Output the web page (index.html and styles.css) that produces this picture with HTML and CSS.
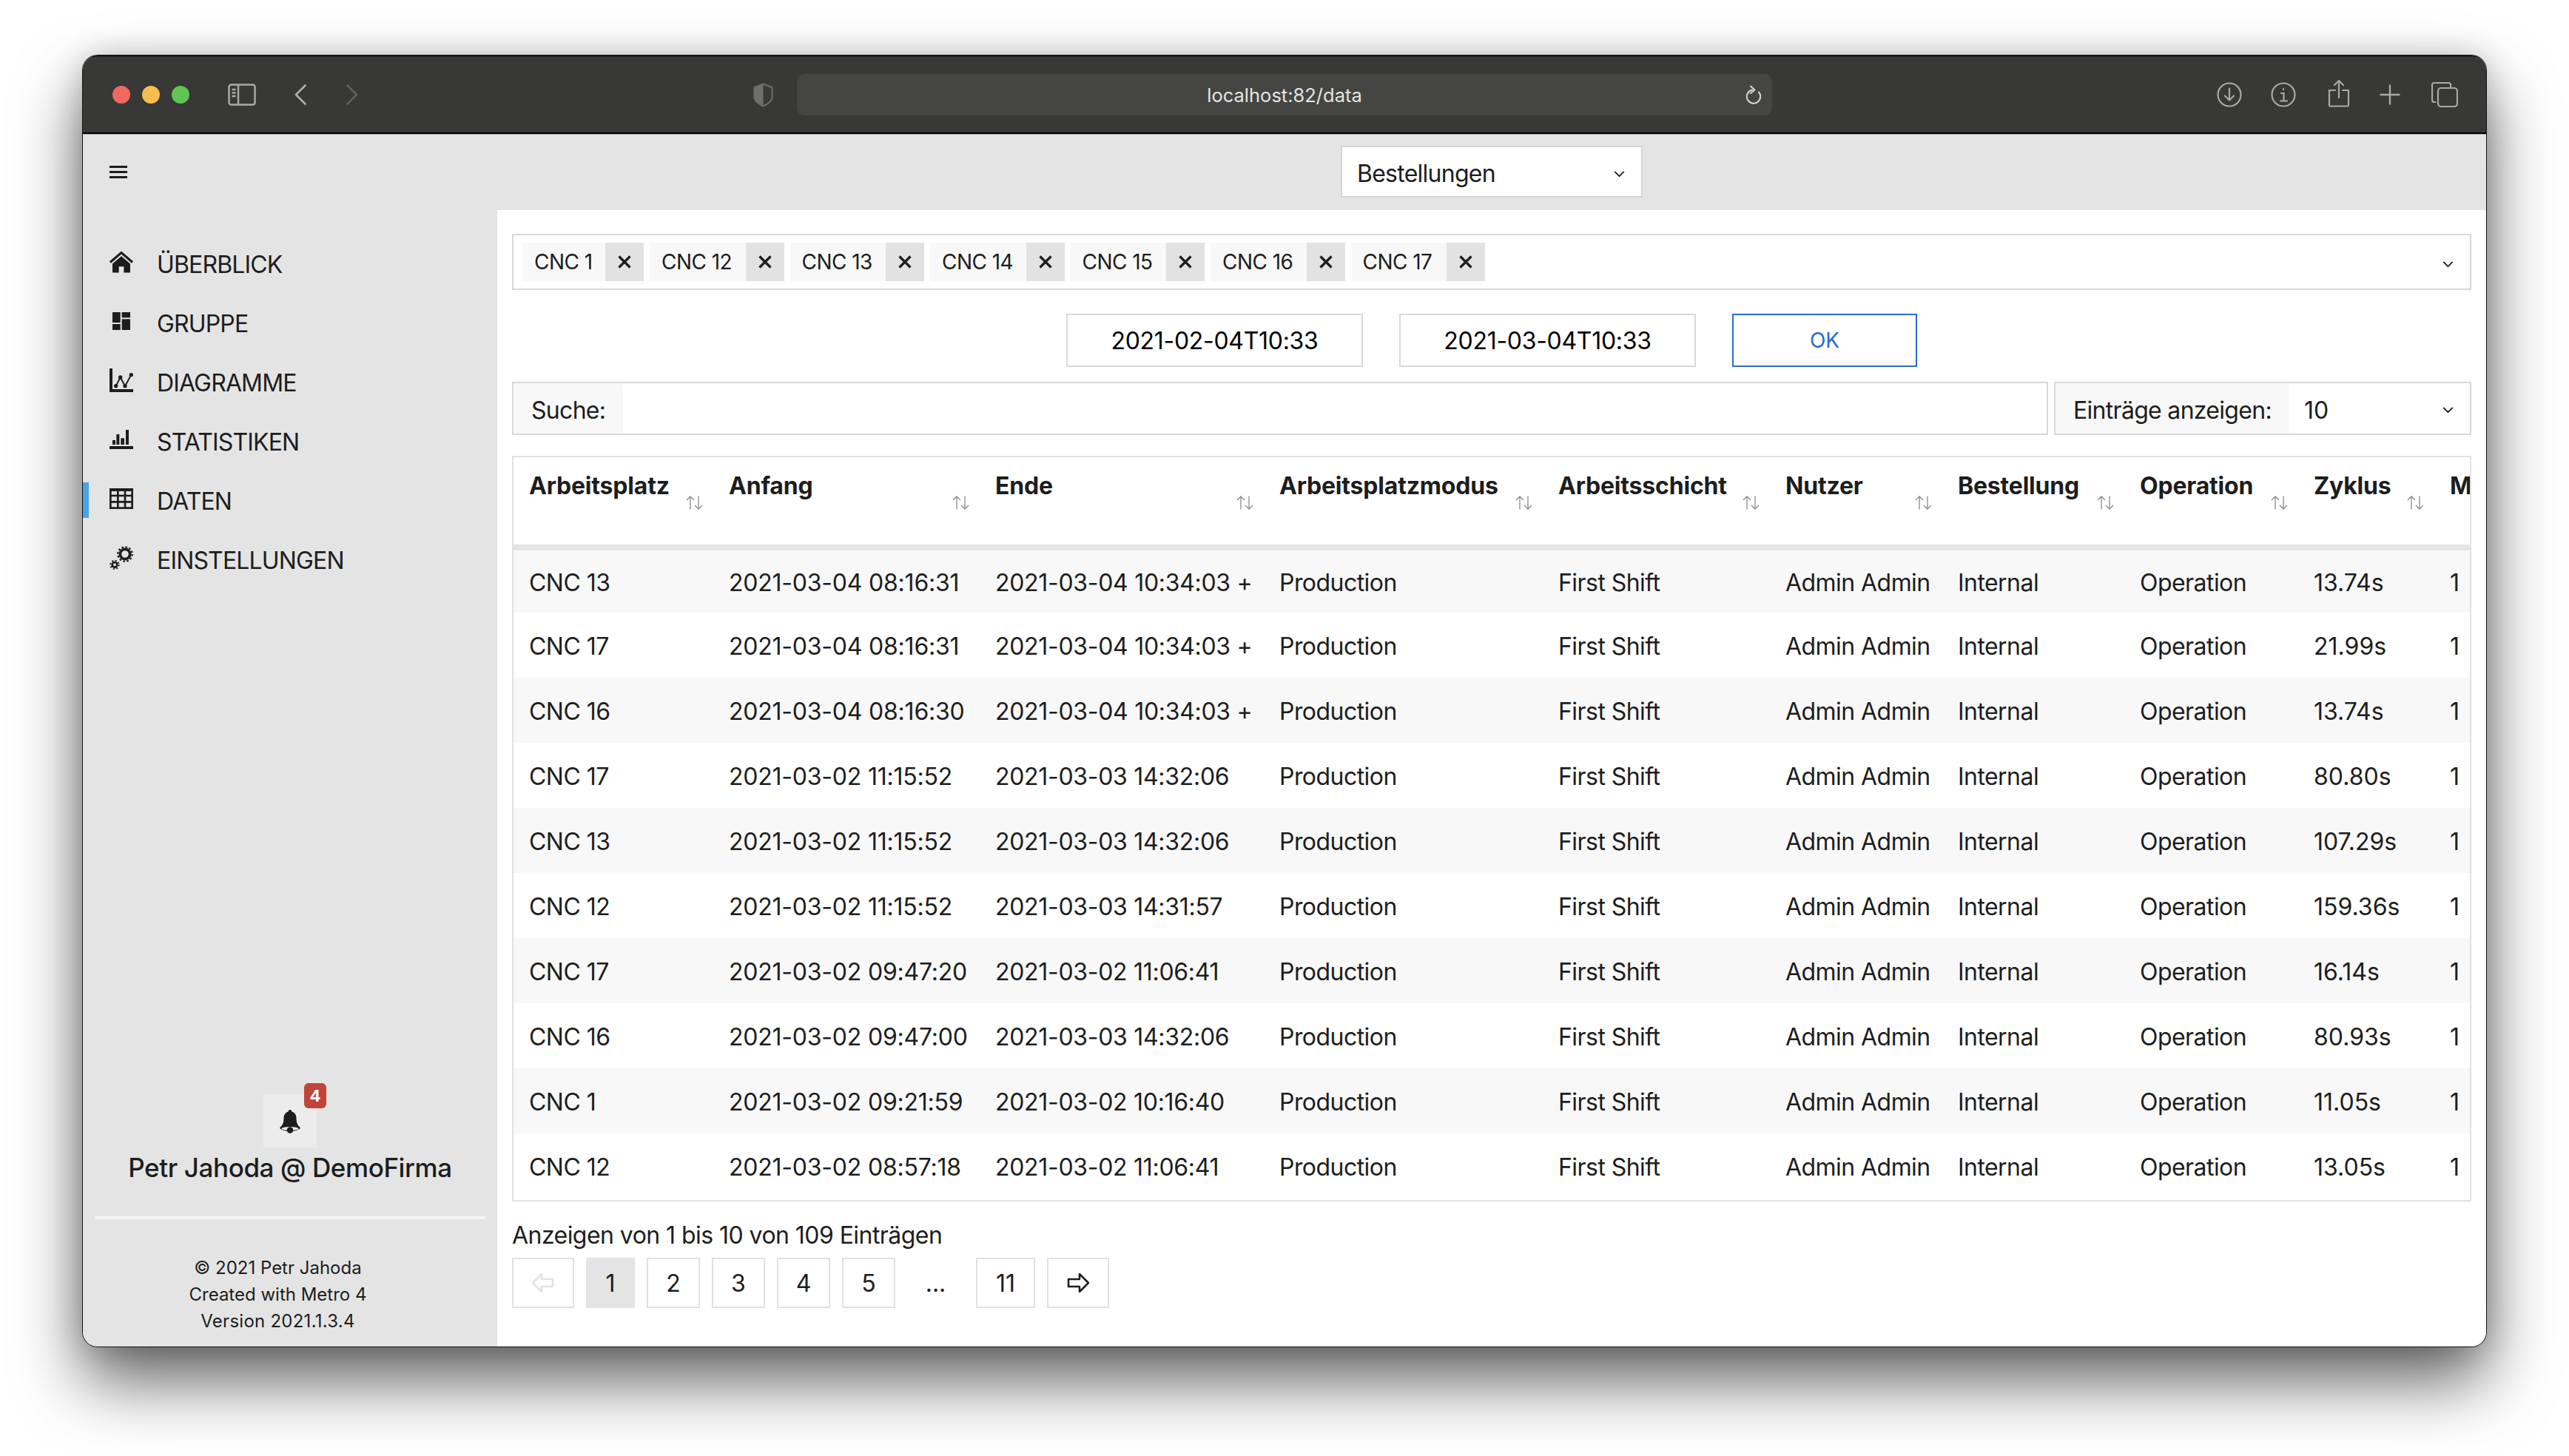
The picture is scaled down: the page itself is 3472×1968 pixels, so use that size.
FILE: index.html
```html
<!DOCTYPE html>
<html>
<head>
  <meta charset="utf-8">
  <title>localhost:82/data</title>
  <link rel="stylesheet" href="styles.css">
</head>
<body>
  <div class="window">
    <div class="titlebar">
      <span class="light light-red"></span>
      <span class="light light-yellow"></span>
      <span class="light light-green"></span>
      <svg class="tb-sidebar" viewBox="0 0 38 30" fill="none" stroke="#a9a9a8" stroke-width="2.5"><rect x="1.5" y="1.5" width="35" height="27" rx="3"/><path d="M14 1.5v27M5.5 8h5M5.5 12.5h5M5.5 17h5"/></svg>
      <svg class="tb-back" viewBox="0 0 16 28" fill="none" stroke="#b0b0af" stroke-width="2.6" stroke-linecap="round" stroke-linejoin="round"><path d="M14.5 1.5 2 14l12.5 12.5"/></svg>
      <svg class="tb-forward" viewBox="0 0 16 28" fill="none" stroke="#5f5f5e" stroke-width="2.6" stroke-linecap="round" stroke-linejoin="round"><path d="M1.5 1.5 14 14 1.5 26.5"/></svg>
      <svg class="tb-shield" viewBox="0 0 27 33" fill="none"><path d="M13.5 1.5 25.5 6v14c0 4-6 9-12 11.5-6-2.5-12-7.5-12-11.5V6z" stroke="#6e6e6d" stroke-width="2"/><path d="M13.5 1.5 1.5 6v14c0 4 6 9 12 11.5z" fill="#6e6e6d"/></svg>
      <div class="urlbar">
        <span class="url-text">localhost:82/data</span>
        <svg class="url-reload" viewBox="0 0 22 26" fill="none" stroke="#d8d8d8" stroke-width="2" stroke-linecap="round" stroke-linejoin="round"><path d="M9 6.5a9.2 9.2 0 1 0 9 3"/><path d="M7 1.5 12.5 6.5 7 11"/></svg>
      </div>
      <div class="tb-actions">
        <svg class="tb-icon" viewBox="0 0 34 34" fill="none" stroke="#a9a9a8" stroke-width="2.2" stroke-linecap="round" stroke-linejoin="round"><circle cx="17" cy="17" r="15.5"/><path d="M17 8.5v16M11 18.5l6 6 6-6"/></svg>
        <svg class="tb-icon tb-info" viewBox="0 0 34 34" fill="none" stroke="#a9a9a8" stroke-width="2.2" stroke-linecap="round"><circle cx="17" cy="17" r="15.5"/><path d="M14 15h3.5v10M13 25.5h9M17 9v1"/></svg>
        <svg class="tb-icon tb-share" viewBox="0 0 30 38" fill="none" stroke="#a9a9a8" stroke-width="2.2" stroke-linecap="round" stroke-linejoin="round"><path d="M15 2v23M9 8l6-6 6 6M10 15H2v20a1.5 1.5 0 0 0 1.5 1.5h23A1.5 1.5 0 0 0 28 35V15h-8"/></svg>
        <svg class="tb-icon tb-plus" viewBox="0 0 28 28" fill="none" stroke="#a9a9a8" stroke-width="2.4" stroke-linecap="round"><path d="M14 1.5v25M1.5 14h25"/></svg>
        <svg class="tb-icon tb-tabs" viewBox="0 0 36 34" fill="none" stroke="#a9a9a8" stroke-width="2.2" stroke-linejoin="round"><path d="M6 27H4a3 3 0 0 1-3-3V4a3 3 0 0 1 3-3h19a3 3 0 0 1 3 3v4"/><rect x="9" y="8" width="26" height="25" rx="4"/></svg>
      </div>
    </div>

    <div class="app-top">
      <div class="app-top-left">
        <div class="hamburger"><span></span><span></span><span></span></div>
      </div>
      <div class="app-top-main">
        <div class="page-select">
          <span class="page-select-text">Bestellungen</span>
          <svg class="chevron page-select-chevron" viewBox="0 0 12 8" fill="none" stroke="#222" stroke-width="1.5"><path d="M1 1.5 6 6.5l5-5"/></svg>
        </div>
      </div>
    </div>

    <div class="app-body">
      <aside class="sidebar">
        <nav class="nav">
          <a class="nav-item">
            <svg class="nav-icon" viewBox="0 0 96 87" fill="#1d1d1d"><path d="M3 45 48 6l45 39" fill="none" stroke="#1d1d1d" stroke-width="9"/><path d="M12 51 48 20l36 31v36H58V62H38v25H12z"/></svg>
            <span>ÜBERBLICK</span>
          </a>
          <a class="nav-item">
            <svg class="nav-icon" viewBox="-12 -12 96 96" fill="#1d1d1d"><rect width="32" height="42"/><rect x="38" width="34" height="22"/><rect y="48" width="32" height="24"/><rect x="38" y="28" width="34" height="44"/></svg>
            <span>GRUPPE</span>
          </a>
          <a class="nav-item">
            <svg class="nav-icon" viewBox="0 0 96 96" fill="#1d1d1d"><path d="M0 0h12v84h84v12H0z"/><path d="M26 71 44 36l19 35 25-45" fill="none" stroke="#1d1d1d" stroke-width="6"/><circle cx="26" cy="71" r="8"/><circle cx="44" cy="36" r="8"/><circle cx="63" cy="71" r="8"/><circle cx="88" cy="26" r="8"/></svg>
            <span>DIAGRAMME</span>
          </a>
          <a class="nav-item">
            <svg class="nav-icon" viewBox="0 0 96 78" fill="#1d1d1d"><rect y="66" width="96" height="12"/><rect x="12" y="42" width="12" height="18"/><rect x="28" y="18" width="12" height="42"/><rect x="46" y="34" width="14" height="26"/><rect x="66" width="12" height="60"/></svg>
            <span>STATISTIKEN</span>
          </a>
          <a class="nav-item nav-item-active">
            <svg class="nav-icon" viewBox="0 0 96 84" fill="none" stroke="#1d1d1d" stroke-width="8"><rect x="4" y="6" width="88" height="74"/><path d="M0 6h96" stroke-width="12"/><path d="M2 30h92M2 55h92M34 4v78M63 4v78"/></svg>
            <span>DATEN</span>
          </a>
          <a class="nav-item">
            <svg class="nav-icon" viewBox="0 0 96 96" fill="none" stroke="#1d1d1d"><circle cx="63" cy="33" r="20" stroke-width="11"/><circle cx="63" cy="33" r="29" stroke-width="7" stroke-dasharray="8 7.2"/><circle cx="21" cy="76" r="10" stroke-width="8"/><circle cx="21" cy="76" r="17" stroke-width="6" stroke-dasharray="6 7.3"/></svg>
            <span>EINSTELLUNGEN</span>
          </a>
        </nav>

        <div class="user-block">
          <div class="bell">
            <svg class="bell-icon" viewBox="0 0 28 32" fill="#1d1d1d"><path d="M14 0c1.5 0 2.3 1 2.3 2.4 4 1 6.2 4.5 6.2 9 0 6 1.5 9 5.5 13.1-1.5 2.5-7 4.5-14 4.5S1.5 27 0 24.500c4-4.100 5.500-7.100 5.500-13.100 0-4.500 2.200-8 6.200-9C11.700 1 12.500 0 14 0z"/><ellipse cx="14" cy="25.500" rx="11.500" ry="2.600" fill="#ececec"/><circle cx="14" cy="27.500" r="4.300"/></svg>
            <span class="bell-badge">4</span>
          </div>
          <div class="user-name">Petr Jahoda @ DemoFirma</div>
        </div>
        <div class="side-divider"></div>
        <div class="side-footer">
          <div>© 2021 Petr Jahoda</div>
          <div>Created with Metro 4</div>
          <div class="side-version">Version 2021.1.3.4</div>
        </div>
      </aside>

      <main class="content">
        <div class="tag-box">
          <div class="tag"><span class="tag-label">CNC 1</span><span class="tag-x"><svg viewBox="0 0 18 18" fill="none" stroke="#1d1d1d" stroke-width="3.2"><path d="M1.5 1.5l15 15M16.5 1.5l-15 15"/></svg></span></div>
          <div class="tag"><span class="tag-label">CNC 12</span><span class="tag-x"><svg viewBox="0 0 18 18" fill="none" stroke="#1d1d1d" stroke-width="3.2"><path d="M1.5 1.5l15 15M16.5 1.5l-15 15"/></svg></span></div>
          <div class="tag"><span class="tag-label">CNC 13</span><span class="tag-x"><svg viewBox="0 0 18 18" fill="none" stroke="#1d1d1d" stroke-width="3.2"><path d="M1.5 1.5l15 15M16.5 1.5l-15 15"/></svg></span></div>
          <div class="tag"><span class="tag-label">CNC 14</span><span class="tag-x"><svg viewBox="0 0 18 18" fill="none" stroke="#1d1d1d" stroke-width="3.2"><path d="M1.5 1.5l15 15M16.5 1.5l-15 15"/></svg></span></div>
          <div class="tag"><span class="tag-label">CNC 15</span><span class="tag-x"><svg viewBox="0 0 18 18" fill="none" stroke="#1d1d1d" stroke-width="3.2"><path d="M1.5 1.5l15 15M16.5 1.5l-15 15"/></svg></span></div>
          <div class="tag"><span class="tag-label">CNC 16</span><span class="tag-x"><svg viewBox="0 0 18 18" fill="none" stroke="#1d1d1d" stroke-width="3.2"><path d="M1.5 1.5l15 15M16.5 1.5l-15 15"/></svg></span></div>
          <div class="tag"><span class="tag-label">CNC 17</span><span class="tag-x"><svg viewBox="0 0 18 18" fill="none" stroke="#1d1d1d" stroke-width="3.2"><path d="M1.5 1.5l15 15M16.5 1.5l-15 15"/></svg></span></div>
          <svg class="chevron tag-chevron" viewBox="0 0 12 8" fill="none" stroke="#222" stroke-width="1.5"><path d="M1 1.5 6 6.5l5-5"/></svg>
        </div>

        <div class="date-row">
          <div class="date-input">2021-02-04T10:33</div>
          <div class="date-input">2021-03-04T10:33</div>
          <button class="ok-btn">OK</button>
        </div>

        <div class="filter-row">
          <div class="search-box">
            <span class="prepend">Suche:</span>
          </div>
          <div class="length-box">
            <span class="prepend prepend-length">Einträge anzeigen:</span>
            <span class="length-value">10</span>
            <svg class="chevron length-chevron" viewBox="0 0 12 8" fill="none" stroke="#222" stroke-width="1.5"><path d="M1 1.5 6 6.5l5-5"/></svg>
          </div>
        </div>

        <div class="table-wrap">
          <table class="data-table">
            <colgroup>
              <col class="c1"><col class="c2"><col class="c3"><col class="c4"><col class="c5">
              <col class="c6"><col class="c7"><col class="c8"><col class="c9"><col class="c10">
            </colgroup>
            <thead>
              <tr>
                <th>Arbeitsplatz<svg class="sort" viewBox="0 0 23 19" fill="none" stroke="#8a8a8a" stroke-width="1.3"><path d="M6 18.5V1M1 6l5-5 5 5M17 .5V18M12 13l5 5 5-5"/></svg></th>
                <th>Anfang<svg class="sort" viewBox="0 0 23 19" fill="none" stroke="#8a8a8a" stroke-width="1.3"><path d="M6 18.5V1M1 6l5-5 5 5M17 .5V18M12 13l5 5 5-5"/></svg></th>
                <th>Ende<svg class="sort" viewBox="0 0 23 19" fill="none" stroke="#8a8a8a" stroke-width="1.3"><path d="M6 18.5V1M1 6l5-5 5 5M17 .5V18M12 13l5 5 5-5"/></svg></th>
                <th>Arbeitsplatzmodus<svg class="sort" viewBox="0 0 23 19" fill="none" stroke="#8a8a8a" stroke-width="1.3"><path d="M6 18.5V1M1 6l5-5 5 5M17 .5V18M12 13l5 5 5-5"/></svg></th>
                <th>Arbeitsschicht<svg class="sort" viewBox="0 0 23 19" fill="none" stroke="#8a8a8a" stroke-width="1.3"><path d="M6 18.5V1M1 6l5-5 5 5M17 .5V18M12 13l5 5 5-5"/></svg></th>
                <th>Nutzer<svg class="sort" viewBox="0 0 23 19" fill="none" stroke="#8a8a8a" stroke-width="1.3"><path d="M6 18.5V1M1 6l5-5 5 5M17 .5V18M12 13l5 5 5-5"/></svg></th>
                <th>Bestellung<svg class="sort" viewBox="0 0 23 19" fill="none" stroke="#8a8a8a" stroke-width="1.3"><path d="M6 18.5V1M1 6l5-5 5 5M17 .5V18M12 13l5 5 5-5"/></svg></th>
                <th>Operation<svg class="sort" viewBox="0 0 23 19" fill="none" stroke="#8a8a8a" stroke-width="1.3"><path d="M6 18.5V1M1 6l5-5 5 5M17 .5V18M12 13l5 5 5-5"/></svg></th>
                <th>Zyklus<svg class="sort" viewBox="0 0 23 19" fill="none" stroke="#8a8a8a" stroke-width="1.3"><path d="M6 18.5V1M1 6l5-5 5 5M17 .5V18M12 13l5 5 5-5"/></svg></th>
                <th>M</th>
              </tr>
            </thead>
            <tbody>
              <tr><td>CNC 13</td><td>2021-03-04 08:16:31</td><td>2021-03-04 10:34:03 +</td><td>Production</td><td>First Shift</td><td>Admin Admin</td><td>Internal</td><td>Operation</td><td>13.74s</td><td>1</td></tr>
              <tr><td>CNC 17</td><td>2021-03-04 08:16:31</td><td>2021-03-04 10:34:03 +</td><td>Production</td><td>First Shift</td><td>Admin Admin</td><td>Internal</td><td>Operation</td><td>21.99s</td><td>1</td></tr>
              <tr><td>CNC 16</td><td>2021-03-04 08:16:30</td><td>2021-03-04 10:34:03 +</td><td>Production</td><td>First Shift</td><td>Admin Admin</td><td>Internal</td><td>Operation</td><td>13.74s</td><td>1</td></tr>
              <tr><td>CNC 17</td><td>2021-03-02 11:15:52</td><td>2021-03-03 14:32:06</td><td>Production</td><td>First Shift</td><td>Admin Admin</td><td>Internal</td><td>Operation</td><td>80.80s</td><td>1</td></tr>
              <tr><td>CNC 13</td><td>2021-03-02 11:15:52</td><td>2021-03-03 14:32:06</td><td>Production</td><td>First Shift</td><td>Admin Admin</td><td>Internal</td><td>Operation</td><td>107.29s</td><td>1</td></tr>
              <tr><td>CNC 12</td><td>2021-03-02 11:15:52</td><td>2021-03-03 14:31:57</td><td>Production</td><td>First Shift</td><td>Admin Admin</td><td>Internal</td><td>Operation</td><td>159.36s</td><td>1</td></tr>
              <tr><td>CNC 17</td><td>2021-03-02 09:47:20</td><td>2021-03-02 11:06:41</td><td>Production</td><td>First Shift</td><td>Admin Admin</td><td>Internal</td><td>Operation</td><td>16.14s</td><td>1</td></tr>
              <tr><td>CNC 16</td><td>2021-03-02 09:47:00</td><td>2021-03-03 14:32:06</td><td>Production</td><td>First Shift</td><td>Admin Admin</td><td>Internal</td><td>Operation</td><td>80.93s</td><td>1</td></tr>
              <tr><td>CNC 1</td><td>2021-03-02 09:21:59</td><td>2021-03-02 10:16:40</td><td>Production</td><td>First Shift</td><td>Admin Admin</td><td>Internal</td><td>Operation</td><td>11.05s</td><td>1</td></tr>
              <tr><td>CNC 12</td><td>2021-03-02 08:57:18</td><td>2021-03-02 11:06:41</td><td>Production</td><td>First Shift</td><td>Admin Admin</td><td>Internal</td><td>Operation</td><td>13.05s</td><td>1</td></tr>
            </tbody>
          </table>
        </div>

        <div class="table-info">Anzeigen von 1 bis 10 von 109 Einträgen</div>

        <div class="pager">
          <span class="page page-arrow page-disabled"><svg viewBox="0 0 30 26" fill="none" stroke="#e2e2e2" stroke-width="2.5" stroke-linejoin="round"><path d="M13 1 1 13l12 12v-7h15V8H13z"/></svg></span>
          <span class="page page-current">1</span>
          <span class="page">2</span>
          <span class="page">3</span>
          <span class="page">4</span>
          <span class="page">5</span>
          <span class="page-dots">...</span>
          <span class="page page-last">11</span>
          <span class="page page-arrow"><svg viewBox="0 0 30 26" fill="none" stroke="#1d1d1d" stroke-width="2.5" stroke-linejoin="round"><path d="M17 1l12 12-12 12v-7H2V8h15z"/></svg></span>
        </div>
      </main>
    </div>
  </div>
</body>
</html>
```

FILE: styles.css
```css
* {
  box-sizing: border-box;
}

body {
  margin: 0;
  padding: 75px 112px 0 112px;
  height: 1968px;
  overflow: hidden;
  background: #fff;
  font-family: Inter, "Liberation Sans", sans-serif;
  font-size: 32px;
  letter-spacing: -.55px;
  color: #1d1d1d;
}

.window {
  width: 3248px;
  height: 1745px;
  display: flex;
  flex-direction: column;
  border-radius: 20px;
  overflow: hidden;
  box-shadow: 0 0 0 1px #111, 0 46px 90px rgba(0, 0, 0, .62), 0 0 40px rgba(0, 0, 0, .18);
}

/* browser chrome */
.titlebar {
  height: 106px;
  flex: none;
  display: flex;
  align-items: center;
  padding-left: 40px;
  background: #383836;
  border-top: 2px solid #1c1c1c;
  border-bottom: 2px solid #000;
}

.light {
  width: 24px;
  height: 24px;
  border-radius: 50%;
  margin-right: 16px;
}

.light-red { background: #f0695f; }
.light-yellow { background: #f6bd50; }
.light-green { background: #60c554; }

.tb-sidebar {
  width: 38px;
  height: 30px;
  margin-left: 36px;
}

.tb-back {
  width: 16px;
  height: 28px;
  margin-left: 52px;
}

.tb-forward {
  width: 16px;
  height: 28px;
  margin-left: 54px;
}

.tb-shield {
  width: 27px;
  height: 33px;
  margin-left: 534px;
}

.urlbar {
  width: 1318px;
  height: 56px;
  margin-left: 32px;
  border-radius: 10px;
  background: #454543;
  display: flex;
  align-items: center;
  justify-content: center;
  position: relative;
  font-size: 25.5px;
  letter-spacing: 0;
  color: #e4e4e4;
}

.url-reload {
  position: absolute;
  right: 14px;
  top: 15px;
  width: 22px;
  height: 26px;
}

.tb-actions {
  display: flex;
  align-items: center;
  margin-left: 601px;
}

.tb-icon {
  width: 34px;
  height: 34px;
  margin-right: 39px;
}

.tb-info {
  margin-right: 43px;
}

.tb-share {
  width: 30px;
  height: 38px;
  margin-top: -4px;
  margin-right: 37px;
}

.tb-plus {
  width: 28px;
  height: 28px;
  margin-left: 3px;
  margin-right: 42px;
}

.tb-tabs {
  width: 36px;
  margin-right: 0;
}

/* app header */
.app-top {
  height: 103px;
  flex: none;
  display: flex;
  background: #e4e4e4;
  border-top: 1px solid #aaa;
}

.app-top-left {
  width: 560px;
  padding: 42px 0 0 36px;
}

.hamburger {
  width: 24px;
  display: flex;
  flex-direction: column;
  gap: 4px;
}

.hamburger span {
  height: 3px;
  background: #1d1d1d;
}

.app-top-main {
  flex: 1;
  display: flex;
  justify-content: center;
  padding-top: 15px;
}

.page-select {
  width: 408px;
  height: 70px;
  display: flex;
  align-items: center;
  justify-content: space-between;
  padding: 0 22px 0 20px;
  background: #fff;
  border: 2px solid #d4d4d4;
}

.page-select-text {
  padding-top: 4px;
  letter-spacing: -.75px;
}

.page-select-chevron {
  margin-top: 5px;
}

.chevron {
  width: 15px;
  height: 10px;
  flex: none;
}

.app-body {
  flex: 1;
  display: flex;
  min-height: 0;
}

/* sidebar */
.sidebar {
  width: 560px;
  flex: none;
  display: flex;
  flex-direction: column;
  background: #e4e4e4;
  padding-top: 32px;
}

.nav {
  display: flex;
  flex-direction: column;
}

.nav-item {
  height: 80px;
  display: flex;
  align-items: center;
  padding-left: 36px;
  letter-spacing: -.85px;
  position: relative;
}

.nav-item span {
  margin-left: 32px;
  padding-top: 4px;
  line-height: 1;
}

.nav-icon {
  width: 32px;
  height: 32px;
  flex: none;
  margin-top: -5px;
}

.nav-item-active::before {
  content: "";
  position: absolute;
  left: 0;
  top: 16px;
  width: 8px;
  height: 48px;
  background: #4aa3e6;
}

.user-block {
  margin-top: auto;
  display: flex;
  flex-direction: column;
  align-items: center;
}

.bell {
  width: 72px;
  height: 72px;
  background: #ececec;
  display: flex;
  align-items: center;
  justify-content: center;
  position: relative;
}

.bell-icon {
  width: 28px;
  height: 32px;
  margin-top: 1px;
}

.bell-badge {
  position: absolute;
  top: -15px;
  right: -13px;
  width: 30px;
  height: 34px;
  border-radius: 6px;
  background: #c1443a;
  color: #fff;
  font-size: 22px;
  font-weight: 700;
  letter-spacing: 0;
  display: flex;
  align-items: center;
  justify-content: center;
}

.user-name {
  margin-top: 4px;
  font-size: 35px;
  font-weight: 500;
  letter-spacing: -.4px;
  line-height: 46px;
}

.side-divider {
  margin: 43px 16px 0 16px;
  height: 4px;
  background: #f5f5f5;
}

.side-footer {
  margin-top: 48px;
  padding: 0 33px 16px 0;
  font-size: 24px;
  letter-spacing: 0;
  line-height: 36px;
  text-align: center;
}

.side-version {
  letter-spacing: .25px;
}

/* main column */
.content {
  flex: 1;
  min-width: 0;
  background: #fff;
  padding: 32px 20px 0 20px;
  display: flex;
  flex-direction: column;
}

.tag-box {
  height: 76px;
  flex: none;
  border: 2px solid #d9d9d9;
  display: flex;
  align-items: center;
  padding-left: 12px;
  gap: 8px;
  position: relative;
}

.tag {
  height: 52px;
  display: flex;
  font-size: 28px;
  background: #f8f8f8;
}

.tag-label {
  width: 112px;
  padding-left: 16px;
  line-height: 52px;
  white-space: nowrap;
}

.tag + .tag .tag-label {
  width: 129.5px;
}

.tag-x {
  width: 52px;
  background: #e2e2e2;
  display: flex;
  align-items: center;
  justify-content: center;
}

.tag-x svg {
  width: 18px;
  height: 18px;
}

.tag-chevron {
  position: absolute;
  right: 22px;
  top: 34px;
}

.date-row {
  margin-top: 32px;
  height: 72px;
  flex: none;
  display: flex;
  justify-content: center;
  gap: 49px;
}

.date-input {
  width: 401px;
  border: 2px solid #d9d9d9;
  display: flex;
  align-items: center;
  justify-content: center;
  letter-spacing: -.3px;
  color: #000;
}

.ok-btn {
  width: 250px;
  border: 2px solid #2a6ad0;
  background: #fff;
  color: #2a6ad0;
  font-family: inherit;
  font-size: 28px;
  padding: 0;
}

.filter-row {
  margin-top: 20px;
  height: 72px;
  flex: none;
  display: flex;
  gap: 8px;
}

.search-box {
  flex: 1;
  border: 2px solid #d9d9d9;
  display: flex;
}

.length-box {
  width: 564px;
  border: 2px solid #d9d9d9;
  display: flex;
  align-items: center;
}

.prepend {
  height: 100%;
  padding: 4px 24px 0 24px;
  background: #f8f8f8;
  display: flex;
  align-items: center;
  letter-spacing: -.7px;
}

.prepend-length {
  width: 316px;
  white-space: nowrap;
}

.length-value {
  margin-left: 20px;
  padding-top: 4px;
  flex: 1;
  letter-spacing: 0;
}

.length-chevron {
  margin-right: 22px;
  margin-top: 3px;
}

.table-wrap {
  margin-top: 28px;
  height: 1008px;
  flex: none;
  border: 2px solid #e1e1e1;
  overflow: hidden;
}

.data-table {
  width: 2696px;
  table-layout: fixed;
  border-collapse: collapse;
}

.c1 { width: 270px; }
.c2 { width: 360px; }
.c3 { width: 384px; }
.c4 { width: 377px; }
.c5 { width: 307px; }
.c6 { width: 233px; }
.c7 { width: 246px; }
.c8 { width: 235px; }
.c9 { width: 184px; }
.c10 { width: 100px; }

.data-table th {
  height: 122px;
  padding: 0 0 0 21px;
  text-align: left;
  vertical-align: top;
  font-weight: 700;
  letter-spacing: -.2px;
  line-height: 78px;
  white-space: nowrap;
  position: relative;
  border-bottom: 8px solid #e4e4e4;
}

.sort {
  position: absolute;
  right: 14px;
  top: 52px;
  width: 23px;
  height: 19px;
}

.data-table td {
  height: 88px;
  padding: 2px 0 0 21px;
  white-space: nowrap;
}

.data-table td:nth-child(2) {
  letter-spacing: -.22px;
}

.data-table td:nth-child(3) {
  letter-spacing: -.3px;
}

.data-table td:nth-child(9),
.data-table td:nth-child(10) {
  letter-spacing: 0;
}

.data-table tbody tr:nth-child(odd) {
  background: #f8f8f8;
}

.table-info {
  margin-top: 26px;
  line-height: 40px;
  flex: none;
}

.pager {
  margin-top: 10px;
  display: flex;
  gap: 16px;
  letter-spacing: 0;
}

.page {
  width: 72px;
  height: 68px;
  border: 2px solid #e1e1e1;
  display: flex;
  align-items: center;
  justify-content: center;
}

.page-current {
  width: 66px;
  background: #e4e4e4;
  border-color: #e4e4e4;
}

.page-arrow {
  width: 84px;
}

.page-arrow svg {
  width: 30px;
  height: 26px;
}

.page-last {
  width: 80px;
}

.page-dots {
  width: 77px;
  display: flex;
  align-items: center;
  justify-content: center;
}
```
